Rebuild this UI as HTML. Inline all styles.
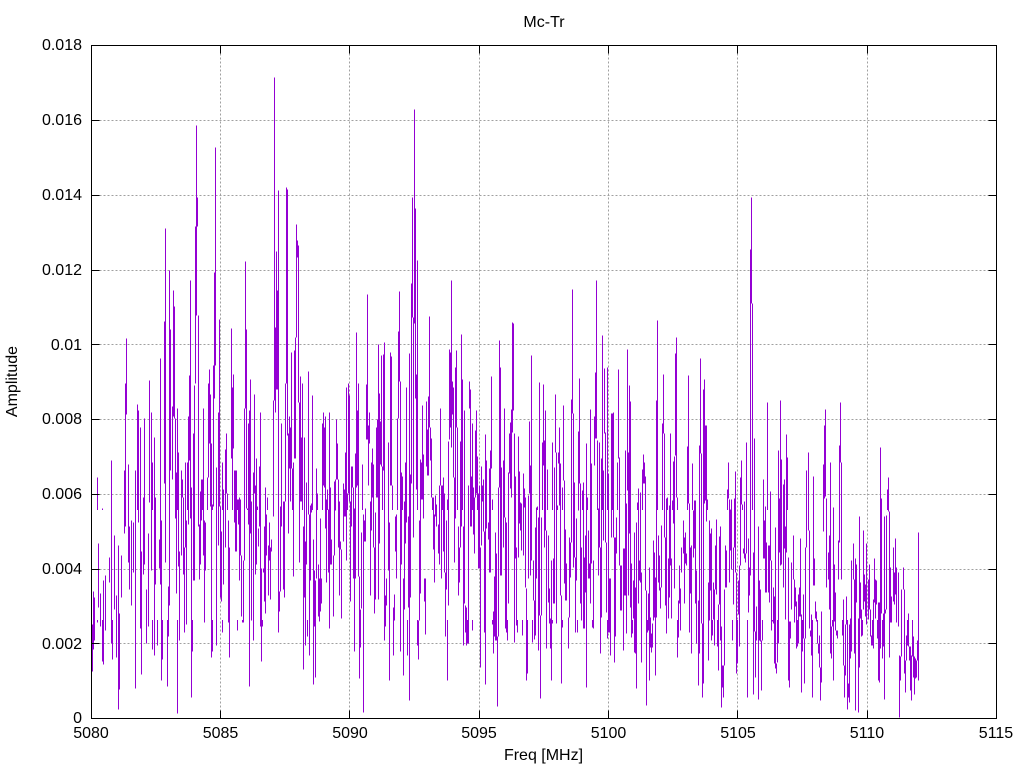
<!DOCTYPE html>
<html><head><meta charset="utf-8"><title>Mc-Tr</title>
<style>html,body{margin:0;padding:0;background:#fff}svg{display:block}text{font-family:"Liberation Sans",sans-serif;font-size:16px;fill:#000}</style></head>
<body><svg width="1024" height="768" viewBox="0 0 1024 768" xmlns="http://www.w3.org/2000/svg">
<defs>
<pattern id="st" patternUnits="userSpaceOnUse" x="0" y="0" width="5" height="10"><rect width="5" height="10" fill="#fff"/><rect x="2" width="1" height="10" fill="#000"/></pattern>
<mask id="thin" maskUnits="userSpaceOnUse" x="0" y="0" width="1024" height="768"><rect width="1024" height="768" fill="#fff"/><rect x="92" y="510" width="830" height="110" fill="url(#st)"/></mask>
</defs>
<rect width="1024" height="768" fill="#fff"/>
<g transform="translate(.5 .5)" shape-rendering="crispEdges">
<path fill="none" stroke="#a0a0a0" stroke-dasharray="2 2" d="M91 643H996M91 569H996M91 494H996M91 419H996M91 344H996M91 270H996M91 195H996M91 120H996M220 45V718M349 45V718M479 45V718M608 45V718M737 45V718M867 45V718"/>
</g>
<g mask="url(#thin)" shape-rendering="crispEdges"><g transform="translate(.5 .5)">
<path fill="none" stroke="#9400d3" d="M91 624V671M92 624V671M93 591V649M94 597V640M97 477V622M98 543V607M100 593V626M102 508V661M103 580V664M105 575V630M107 564V599M109 557V582M111 460V643M112 560V659M114 535V609M116 595V657M118 545V709M119 613V689M121 555V597M122 513V568M124 470V533M125 383V526M126 338V414M128 464V562M129 526V589M131 520V605M133 522V572M135 470V688M137 404V526M138 410V522M140 427V628M141 551V674M143 497V574M144 418V564M146 589V643M148 533V626M149 380V502M151 412V570M152 462V649M154 437V655M155 497V584M157 562V645M159 539V568M160 358V584M161 520V680M162 597V659M164 321V483M165 228V562M167 522V686M168 586V636M169 270V605M170 329V470M172 406V479M173 290V416M174 306V418M175 418V518M176 472V593M177 408V713M178 452V566M179 551V640M181 470V555M182 479V497M183 497V574M184 547V632M185 462V547M186 520V624M187 462V566M188 416V524M189 375V460M190 280V518M191 487V697M192 520V651M193 433V580M194 385V580M195 226V383M196 125V315M197 197V226M198 315V526M199 524V579M200 491V564M201 479V520M202 479V545M203 408V555M204 520V622M205 522V570M207 477V613M208 383V477M209 369V443M210 394V506M211 443V657M212 504V651M213 365V506M214 272V398M215 147V365M216 467V645M217 545V616M218 412V545M219 319V506M220 506V597M221 531V601M222 462V632M223 489V584M225 449V547M226 433V493M227 493V551M228 520V622M229 547V657M231 328V458M232 387V535M233 374V448M234 470V522M235 470V551M236 470V551M237 499V630M238 499V524M239 497V580M240 499V555M241 555V616M242 560V622M243 560V622M244 408V560M245 261V408M246 329V508M247 508V618M248 423V524M249 410V686M250 379V533M251 501V620M252 584V611M253 472V640M254 394V493M255 485V574M256 458V564M257 506V564M258 528V546M259 466V526M260 412V626M261 568V661M262 547V626M263 568V572M264 526V601M265 487V613M266 514V555M267 497V551M268 545V595M269 522V560M270 547V599M271 539V551M272 537V557M273 400V516M274 77V400M275 327V412M276 251V389M277 290V389M278 190V632M279 591V611M280 506V591M281 423V526M282 526V597M283 501V589M284 501V597M285 383V501M286 187V383M287 189V435M288 433V533M289 416V468M290 427V501M291 352V468M292 468V551M293 462V576M294 350V458M295 337V458M296 224V337M297 240V257M298 245V402M299 402V562M300 376V501M301 437V501M302 383V526M303 526V669M304 437V597M305 541V645M306 482V564M307 541V636M308 371V514M309 514V655M310 505V580M311 503V512M312 395V539M313 539V684M314 570V626M315 580V677M316 468V578M317 493V564M318 564V616M319 578V621M320 518V611M321 578V603M322 423V518M323 412V485M324 427V487M325 416V528M326 499V582M327 489V535M328 509V572M329 412V628M330 487V564M331 539V564M332 512V561M333 555V616M334 481V555M335 479V510M336 419V479M337 443V479M338 479V547M339 501V595M340 541V549M341 549V618M342 549V605M343 483V541M344 489V516M345 452V516M346 387V560M347 493V605M348 383V493M349 395V501M350 501V601M351 466V526M352 466V487M353 487V578M354 508V651M355 453V578M356 332V487M357 410V485M358 383V576M359 576V678M360 609V647M361 532V608M362 464V589M363 514V712M364 520V541M365 508V541M366 384V439M367 294V439M368 425V485M369 412V443M370 501V595M371 462V530M372 448V497M373 464V547M374 547V613M375 512V599M376 427V497M377 419V497M378 344V599M379 393V543M380 421V464M381 355V466M382 466V574M383 354V470M384 342V640M385 595V626M386 578V605M387 524V605M388 442V570M389 522V680M390 352V485M391 356V485M392 485V613M393 607V655M394 594V620M395 516V551M396 514V578M397 418V514M398 331V418M399 291V381M400 381V651M401 472V564M402 476V578M403 578V675M404 501V609M405 462V543M406 387V522M407 522V655M408 516V607M409 353V700M410 474V597M411 283V483M412 197V317M413 317V537M414 109V323M415 208V398M416 374V489M417 260V645M418 620V659M419 520V620M420 459V593M421 462V499M422 405V499M423 454V518M424 578V601M425 578V634M426 401V466M427 429V475M428 396V475M429 316V427M430 427V460M431 438V497M432 497V537M433 497V549M434 514V582M435 495V516M436 504V526M437 520V528M438 524V553M439 485V564M440 408V485M441 485V578M442 485V593M443 477V551M444 493V572M445 572V636M446 520V589M447 499V680M448 441V605M449 349V439M450 352V427M451 280V447M452 381V414M453 387V477M454 477V562M455 367V518M456 350V427M457 427V547M458 526V595M459 547V582M460 441V547M461 334V526M462 379V526M463 526V645M464 410V603M465 605V632M466 607V645M467 568V643M468 485V643M469 381V408M470 389V526M471 476V526M472 423V630M473 487V534M474 497V553M475 430V497M476 410V493M477 456V534M478 493V568M479 485V568M480 547V667M481 466V545M482 485V501M483 479V531M484 531V632M485 434V684M486 460V528M487 512V539M488 522V539M489 468V572M490 450V572M491 376V468M492 499V624M493 611V653M494 576V636M495 532V640M496 553V640M497 636V706M498 487V636M499 340V487M500 367V575M501 467V575M502 547V583M503 460V547M504 408V517M505 517V628M506 522V632M507 603V640M508 472V603M509 433V473M510 422V488M511 409V497M512 322V432M513 323V410M514 433V642M515 476V558M516 547V625M517 533V632M518 436V557M519 471V523M520 502V530M521 503V550M522 550V635M523 473V555M524 488V507M525 497V587M526 588V680M527 588V673M528 495V578M529 421V493M530 465V575M531 355V560M532 562V642M533 560V600M534 600V639M535 527V635M536 507V578M537 506V615M538 517V650M539 382V615M540 615V698M541 517V615M542 442V523M543 384V465M544 440V547M545 410V530M546 530V648M547 469V558M548 535V602M549 588V623M550 618V648M551 560V680M552 442V623M553 558V603M554 467V603M555 394V452M556 452V623M557 505V578M558 452V463M559 427V505M560 463V595M561 595V683M562 487V627M563 405V480M564 480V583M565 529V600M566 563V600M567 595V617M568 617V648M569 537V617M570 542V577M571 399V542M572 289V413M573 413V567M574 482V557M575 557V632M576 518V580M577 510V632M578 431V510M579 378V483M580 483V603M581 547V620M582 490V557M583 482V628M584 557V628M585 535V592M586 443V687M587 497V592M588 530V578M589 563V578M590 409V603M591 463V563M592 563V627M593 560V628M594 416V465M595 372V438M596 280V438M597 440V598M598 508V575M599 442V547M600 547V653M601 458V617M602 335V562M603 470V540M604 368V433M605 432V542M606 542V612M607 367V638M608 473V632M609 578V632M610 578V655M611 413V537M612 413V537M613 412V537M614 537V662M615 537V636M616 517V553M617 462V533M618 369V458M619 457V565M620 565V610M621 565V610M622 537V567M623 548V650M624 548V595M625 450V595M626 503V633M627 349V490M628 452V595M629 385V533M630 401V607M631 563V637M632 570V633M633 580V618M634 532V652M635 587V653M636 522V688M637 502V600M638 488V603M639 560V580M640 492V582M641 572V662M642 469V563M643 454V483M644 462V483M645 476V590M646 590V705M647 560V632M648 593V630M649 567V680M650 617V647M651 633V652M652 623V647M653 540V620M654 552V617M655 577V675M656 400V617M657 320V535M658 535V582M659 555V590M660 587V608M661 525V587M662 423V525M663 374V433M664 433V537M665 537V605M666 498V633M667 497V585M668 558V618M669 505V597M670 433V565M671 558V618M672 500V578M673 461V523M674 456V588M675 353V455M676 337V497M677 497V657M678 600V637M679 565V603M680 588V630M681 547V572M682 522V572M683 520V553M684 537V603M685 532V563M686 553V565M687 446V552M688 375V503M689 503V632M690 547V593M691 545V653M692 463V558M693 510V557M694 500V548M695 500V603M696 570V643M697 515V600M698 600V685M699 445V653M700 358V453M701 453V623M702 623V697M703 389V683M704 379V503M705 425V500M706 425V521M707 499V619M708 582V660M709 520V620M710 533V590M711 528V640M712 584V635M713 582V619M714 589V645M715 545V589M716 519V594M717 604V646M718 604V670M719 536V604M720 526V640M721 626V707M722 665V687M723 665V697M724 589V665M725 545V587M726 550V587M727 489V585M728 462V498M729 499V582M730 509V550M731 499V569M732 569V640M733 547V604M734 498V547M735 471V572M736 572V673M737 579V663M738 580V614M739 565V646M740 477V565M741 460V504M742 504V548M743 548V553M744 501V558M745 553V562M746 442V553M747 553V697M748 538V612M749 567V595M750 249V575M751 197V303M752 303V551M753 552V694M754 438V631M755 631V677M756 606V640M757 567V607M758 526V699M759 580V640M760 589V641M761 640V690M762 521V640M763 479V558M764 520V558M765 506V592M766 542V592M767 402V542M768 545V592M769 545V602M770 491V560M771 560V630M772 604V621M773 587V623M774 596V663M775 527V668M776 663V673M777 552V662M778 450V643M779 498V552M780 400V565M781 459V564M782 565V614M783 484V587M784 479V548M785 526V619M786 434V552M787 457V535M788 557V680M789 621V687M790 621V638M791 562V609M792 533V609M793 535V579M794 579V622M795 587V606M796 601V648M797 604V646M798 594V643M799 587V616M800 538V616M801 614V692M802 616V651M803 594V638M804 638V683M805 547V638M806 470V547M807 524V547M808 452V530M809 530V628M810 630V636M811 614V655M812 587V697M813 476V585M814 558V585M815 601V618M816 611V621M817 591V643M818 643V653M819 635V667M820 667V700M821 611V682M822 531V611M823 464V531M824 425V498M825 409V496M826 498V587M827 550V579M828 552V579M829 535V609M830 462V653M831 626V658M832 550V626M833 507V680M834 564V621M835 592V630M836 630V635M837 630V638M838 540V579M839 445V542M840 402V462M841 462V579M842 565V635M843 599V665M844 665V697M845 624V675M846 596V624M847 601V709M848 683V697M849 624V702M850 618V658M851 560V651M852 523V560M853 543V579M854 579V653M855 558V710M856 564V602M857 525V618M858 618V712M859 516V667M860 582V618M861 609V636M862 582V635M863 530V609M864 574V601M865 584V616M866 543V624M867 538V619M868 579V619M869 564V609M870 609V636M871 635V645M872 548V645M873 599V648M874 558V602M875 579V618M876 580V604M877 526V638M878 602V680M879 602V682M880 447V648M881 498V613M882 602V658M883 613V646M884 516V699M885 609V613M886 515V609M887 489V565M888 477V511M889 511V657M890 567V622M891 596V622M892 570V597M893 547V601M894 572V604M895 538V594M896 567V622M897 535V618M898 572V626M899 655V717M900 656V680M901 589V656M902 553V589M903 567V589M904 589V673M905 660V692M906 635V660M907 594V645M908 613V646M909 646V660M910 646V690M911 655V700M912 609V656M913 636V677M914 656V694M915 658V678M916 660V677M917 640V660M918 532V680"/>
</g></g>
<g transform="translate(.5 .5)" shape-rendering="crispEdges">
<path fill="none" stroke="#000" d="M91 45H996V718H91ZM91 643H99M91 569H99M91 494H99M91 419H99M91 344H99M91 270H99M91 195H99M91 120H99M996 643H988M996 569H988M996 494H988M996 419H988M996 344H988M996 270H988M996 195H988M996 120H988M220 718V710M349 718V710M479 718V710M608 718V710M737 718V710M867 718V710M220 45V53M349 45V53M479 45V53M608 45V53M737 45V53M867 45V53"/>
</g>
<g text-anchor="end">
<text x="82" y="50">0.018</text><text x="82" y="125">0.016</text><text x="82" y="200">0.014</text><text x="82" y="275">0.012</text><text x="82" y="350">0.01</text><text x="82" y="424">0.008</text><text x="82" y="499">0.006</text><text x="82" y="574">0.004</text><text x="82" y="649">0.002</text><text x="82" y="723">0</text>
</g>
<g text-anchor="middle">
<text x="91" y="738">5080</text><text x="220.5" y="738">5085</text><text x="350" y="738">5090</text><text x="479" y="738">5095</text><text x="608.5" y="738">5100</text><text x="738" y="738">5105</text><text x="867" y="738">5110</text><text x="996" y="738">5115</text>
<text x="544" y="27">Mc-Tr</text>
<text x="543.5" y="760">Freq [MHz]</text>
<text transform="translate(17 381.5) rotate(-90)">Amplitude</text>
</g>
</svg></body></html>
